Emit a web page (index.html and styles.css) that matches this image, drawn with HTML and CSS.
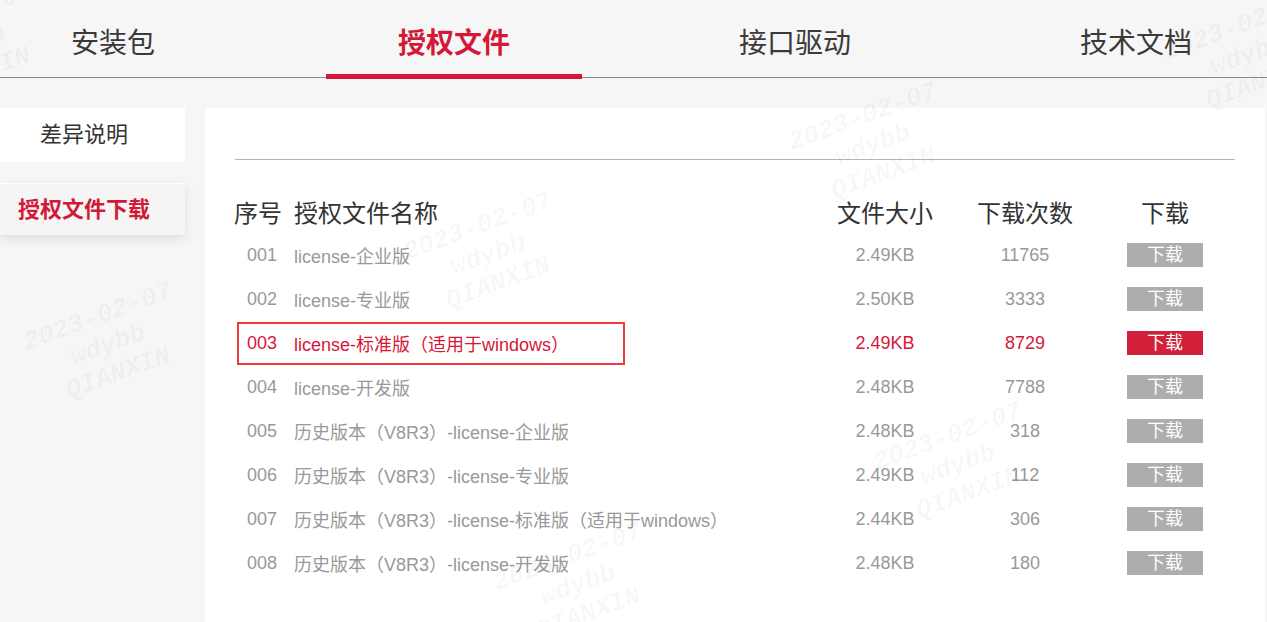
FILE: index.html
```html
<!DOCTYPE html>
<html lang="zh-CN">
<head>
<meta charset="utf-8">
<title>授权文件</title>
<link rel="stylesheet" href="styles.css">
</head>
<body>
<nav class="tabs">
  <a class="tab">安装包</a>
  <a class="tab active">授权文件</a>
  <a class="tab">接口驱动</a>
  <a class="tab">技术文档</a>
</nav>
<div class="content">
  <aside class="side">
    <div class="side-item">差异说明</div>
    <div class="side-item active">授权文件下载</div>
  </aside>
  <main class="panel">
    <div class="rule"></div>
    <div class="table">
      <div class="row head">
        <div class="c-no">序号</div>
        <div class="c-name">授权文件名称</div>
        <div class="c-size">文件大小</div>
        <div class="c-count">下载次数</div>
        <div class="c-dl">下载</div>
      </div>
      <div class="row">
        <div class="c-no">001</div><div class="c-name">license-企业版</div>
        <div class="c-size">2.49KB</div><div class="c-count">11765</div>
        <div class="c-dl"><span class="btn">下载</span></div>
      </div>
      <div class="row">
        <div class="c-no">002</div><div class="c-name">license-专业版</div>
        <div class="c-size">2.50KB</div><div class="c-count">3333</div>
        <div class="c-dl"><span class="btn">下载</span></div>
      </div>
      <div class="row hot">
        <div class="c-no">003</div><div class="c-name">license-标准版（适用于windows）</div>
        <div class="c-size">2.49KB</div><div class="c-count">8729</div>
        <div class="c-dl"><span class="btn">下载</span></div>
        <span class="mark"></span>
      </div>
      <div class="row">
        <div class="c-no">004</div><div class="c-name">license-开发版</div>
        <div class="c-size">2.48KB</div><div class="c-count">7788</div>
        <div class="c-dl"><span class="btn">下载</span></div>
      </div>
      <div class="row">
        <div class="c-no">005</div><div class="c-name">历史版本（V8R3）-license-企业版</div>
        <div class="c-size">2.48KB</div><div class="c-count">318</div>
        <div class="c-dl"><span class="btn">下载</span></div>
      </div>
      <div class="row">
        <div class="c-no">006</div><div class="c-name">历史版本（V8R3）-license-专业版</div>
        <div class="c-size">2.49KB</div><div class="c-count">112</div>
        <div class="c-dl"><span class="btn">下载</span></div>
      </div>
      <div class="row">
        <div class="c-no">007</div><div class="c-name">历史版本（V8R3）-license-标准版（适用于windows）</div>
        <div class="c-size">2.44KB</div><div class="c-count">306</div>
        <div class="c-dl"><span class="btn">下载</span></div>
      </div>
      <div class="row">
        <div class="c-no">008</div><div class="c-name">历史版本（V8R3）-license-开发版</div>
        <div class="c-size">2.48KB</div><div class="c-count">180</div>
        <div class="c-dl"><span class="btn">下载</span></div>
      </div>
    </div>
  </main>
</div>
<div class="wm-layer">
  <div class="wm wm1">2023-02-07<br>wdybb<br>QIANXIN</div>
  <div class="wm wm2">2023-02-07<br>wdybb<br>QIANXIN</div>
  <div class="wm wm3">2023-02-07<br>wdybb<br>QIANXIN</div>
  <div class="wm wm4">2023-02-07<br>wdybb<br>QIANXIN</div>
  <div class="wm wm5">2023-02-07<br>wdybb<br>QIANXIN</div>
  <div class="wm wm6">2023-02-07<br>wdybb<br>QIANXIN</div>
  <div class="wm wm7">2023-02-07<br>wdybb<br>QIANXIN</div>
</div>
</body>
</html>
```
FILE: styles.css
```css
* { box-sizing: border-box; }
html, body { margin: 0; padding: 0; }
body {
  width: 1267px;
  height: 622px;
  overflow: hidden;
  background: #f6f6f6;
  font-family: "Liberation Sans", "Noto Sans CJK SC", sans-serif;
  color: #333;
  position: relative;
}
.tabs {
  display: flex;
  gap: 85px;
  margin-left: -15px;
  width: 1282px;
  height: 78px;
  border-bottom: 1px solid #8a8a8a;
}
.tab {
  width: 256px;
  flex: none;
  height: 77px;
  padding-top: 25px;
  text-align: center;
  font-size: 28px;
  line-height: 38px;
  color: #3a3a3a;
  position: relative;
}
.tab.active {
  color: #d21a38;
  font-weight: bold;
}
.tab.active::after {
  content: "";
  position: absolute;
  left: 0;
  right: 0;
  bottom: -2px;
  height: 5px;
  background: #d21a38;
}
.content {
  display: flex;
  padding-top: 30px;
  height: 544px;
}
.side {
  width: 185px;
  flex: none;
  display: flex;
  flex-direction: column;
  gap: 21px;
}
.side-item {
  height: 54px;
  background: #fff;
  padding-left: 40px;
  font-size: 22px;
  line-height: 54px;
  color: #333;
}
.side-item.active {
  height: 52px;
  line-height: 52px;
  padding-left: 18px;
  background: #f5f5f5;
  border-top: 1px solid #fff;
  color: #d21a38;
  font-weight: bold;
  box-shadow: 0 4px 10px rgba(0, 0, 0, 0.10);
}
.panel {
  margin-left: 20px;
  width: 1060px;
  flex: none;
  background: #fff;
  padding: 51px 30px 0 30px;
}
.rule {
  height: 1px;
  background: #b4b4b4;
}
.table {
  margin-top: 29px;
  margin-left: -1px;
}
.row {
  display: grid;
  grid-template-columns: 60px 521px 140px 140px 140px;
  height: 44px;
  align-items: center;
  font-size: 18px;
  color: #999;
  position: relative;
}
.row .c-no { padding-left: 13px; }
.row .c-size, .row .c-count, .row .c-dl { text-align: center; }
.row.head {
  font-size: 24px;
  color: #333;
}
.row.head .c-no { padding-left: 0; }
.btn {
  display: inline-block;
  width: 76px;
  height: 24px;
  line-height: 24px;
  background: #adadad;
  color: #fff;
  font-size: 18px;
  text-align: center;
  vertical-align: middle;
}
.row.hot { color: #d6163b; }
.row.hot .btn { background: #d21f3a; }
.mark {
  position: absolute;
  left: 3px;
  top: 1px;
  width: 388px;
  height: 43px;
  border: 2px solid #f03a3e;
  pointer-events: none;
}
.wm-layer {
  position: absolute;
  inset: 0;
  pointer-events: none;
  overflow: hidden;
}
.wm {
  position: absolute;
  font-family: "Liberation Mono", monospace;
  font-weight: bold;
  font-style: italic;
  font-size: 26px;
  line-height: 30px;
  color: rgba(0, 0, 0, 0.035);
  transform: rotate(-20deg);
  text-align: center;
  white-space: nowrap;
}
.wm1 { left: 410px; top: 210px; }
.wm2 { left: 30px; top: 300px; }
.wm3 { left: 795px; top: 100px; }
.wm4 { left: 880px; top: 420px; }
.wm5 { left: 500px; top: 540px; }
.wm6 { left: 1170px; top: 10px; }
.wm7 { left: -110px; top: 0px; }
```
